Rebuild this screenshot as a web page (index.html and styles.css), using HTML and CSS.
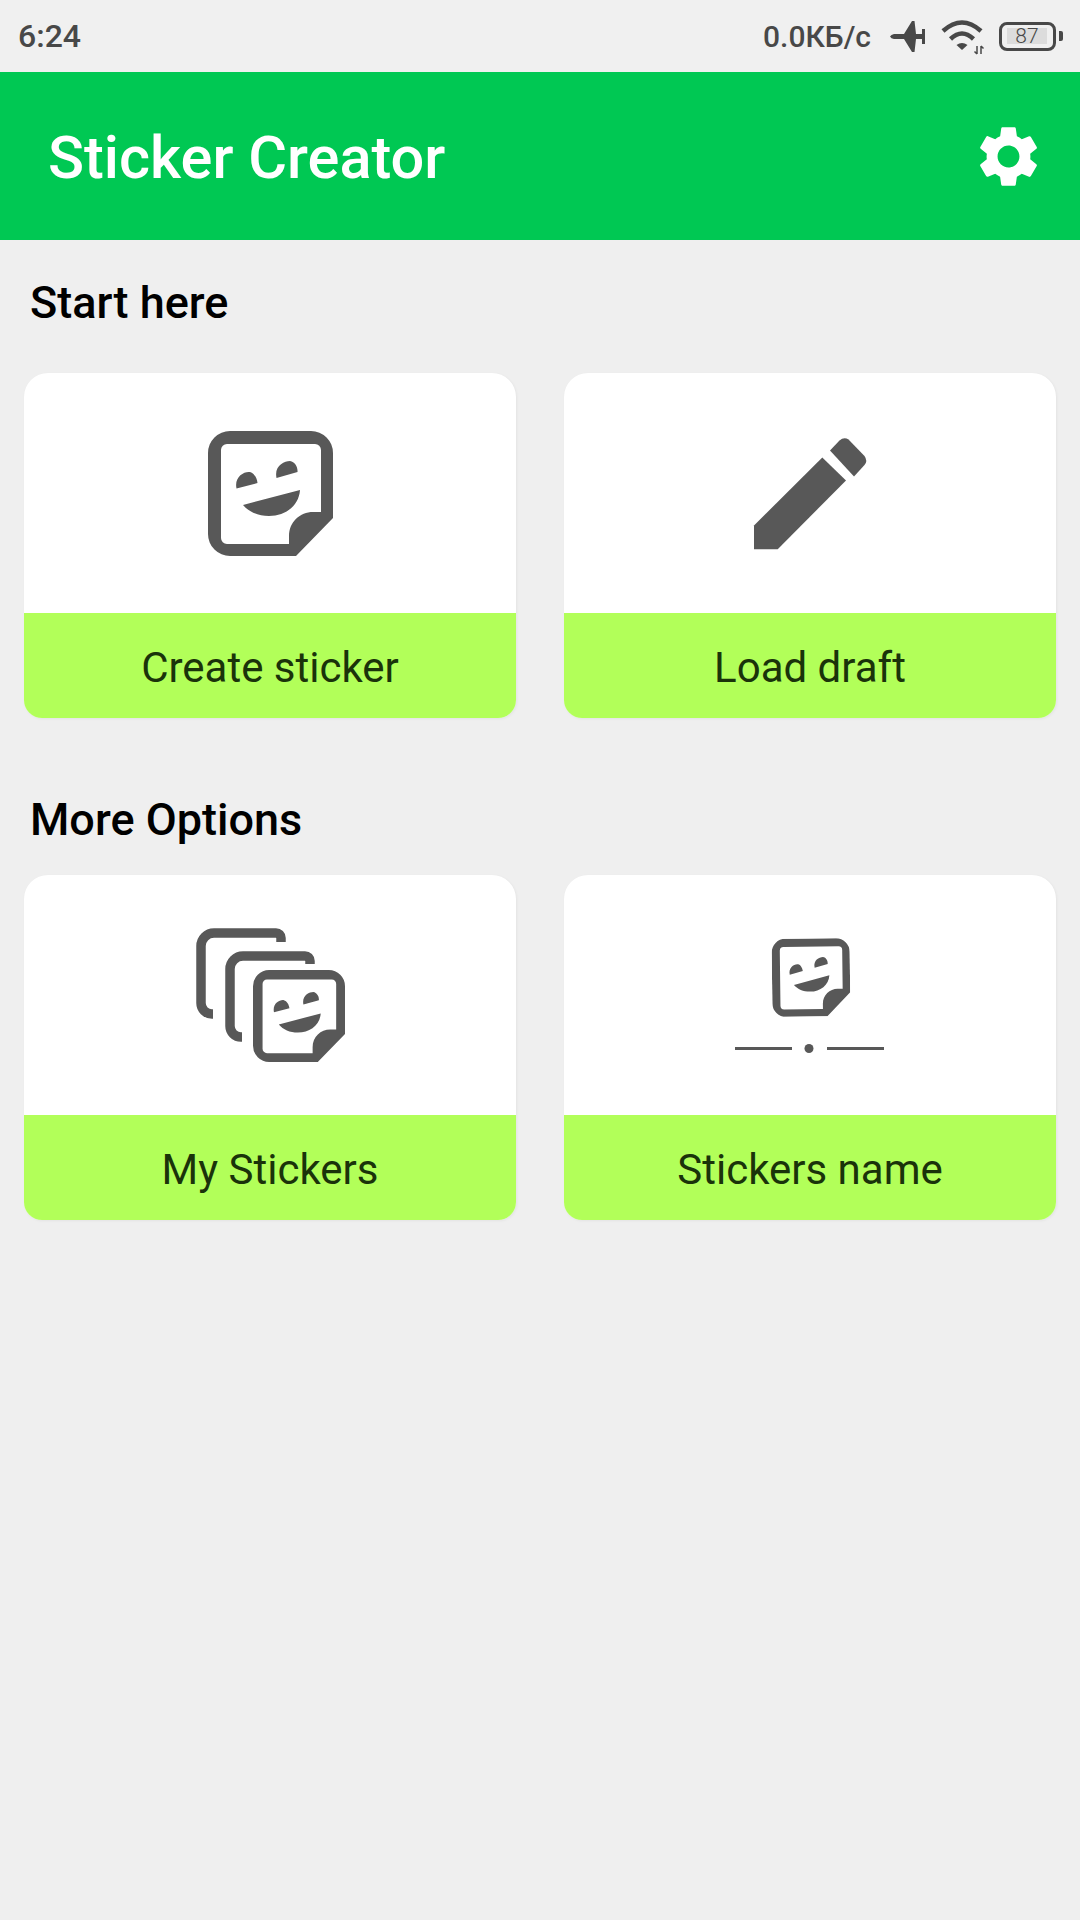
FILE: index.html
```html
<!DOCTYPE html>
<html lang="en">
<head>
<meta charset="utf-8">
<title>Sticker Creator</title>
<link rel="stylesheet" href="styles.css">
</head>
<body>
<svg class="defs" width="0" height="0" aria-hidden="true">
  <defs>
    <symbol id="sticker" viewBox="0 0 125 125">
      <path fill-rule="evenodd" d="M22 0H103A22 22 0 0 1 125 22V87L88 125H22A22 22 0 0 1 0 103V22A22 22 0 0 1 22 0ZM19 13A6 6 0 0 0 13 19V107A6 6 0 0 0 19 113H81V105C81 91 92 81 105 81H113V19A6 6 0 0 0 107 13Z"/>
      <path d="M28.500 57.500C26 46 36 40 42 41C46 42 49 47 49.500 52ZM68.500 47C66 35 76 30 82 30C87 31 90 36 89.500 41ZM35 74L92 59C91 75 77 85 61 85C50 85 41 81 35 74Z"/>
    </symbol>
  </defs>
</svg>
<header class="status-bar">
  <span class="clock">6:24</span>
  <div class="status-right">
    <span class="net">0.0КБ/с</span>
    <svg class="plane" width="35" height="31" viewBox="0 0 35 31"><path d="M0 15.500Q1 13.500 4 13H14L22 0H24.500L26 13H32V8H35V23H32V18H26L24.500 31H22L14 18H4Q1 17.500 0 15.500Z"/></svg>
    <svg class="wifi" width="42" height="33" viewBox="0 0 42 33"><g fill="none" stroke-width="4.500"><path d="M2 11Q21 -6 40 11"/><path d="M9.500 19Q21 8 32.500 19"/></g><path class="wifi-dot" d="M15.500 25Q21 21 26.500 25L21 30Z"/><path class="arrows" d="M36 26V34M33.500 31.500L36 34M40 26V34M40 26L42.500 28.500"/></svg>
    <div class="battery">
      <div class="battery-body"><span class="battery-level">87</span></div>
      <span class="battery-nub"></span>
    </div>
  </div>
</header>
<header class="app-bar">
  <h1 class="app-title">Sticker Creator</h1>
  <svg class="gear" width="73" height="73" viewBox="0 0 24 24"><path d="M19.140 12.940c.04-.3.06-.61.06-.94 0-.32-.02-.64-.07-.94l2.030-1.580c.18-.14.23-.41.12-.61l-1.920-3.320c-.12-.22-.37-.29-.59-.22l-2.390.96c-.5-.38-1.030-.7-1.620-.94l-.36-2.540c-.04-.24-.24-.41-.48-.41h-3.840c-.24 0-.43.17-.47.41l-.36 2.540c-.59.24-1.130.57-1.620.94l-2.390-.96c-.22-.08-.47 0-.59.22L2.740 8.870c-.12.21-.08.47.12.61l2.030 1.580c-.05.3-.09.63-.09.94s.02.64.07.94l-2.030 1.580c-.18.14-.23.41-.12.61l1.920 3.320c.12.22.37.29.59.22l2.390-.96c.5.38 1.030.7 1.620.94l.36 2.540c.05.24.24.41.48.41h3.840c.24 0 .44-.17.47-.41l.36-2.540c.59-.24 1.130-.56 1.620-.94l2.390.96c.22.08.47 0 .59-.22l1.920-3.320c.12-.22.07-.47-.12-.61l-2.010-1.580zM12 15.600c-1.980 0-3.600-1.620-3.600-3.600s1.620-3.600 3.600-3.600 3.600 1.620 3.600 3.600-1.620 3.600-3.600 3.600z"/></svg>
</header>
<main class="content">
  <h2 class="section-title section-first">Start here</h2>
  <div class="card-grid">
    <article class="card">
      <div class="card-icon"><svg class="icon" width="125" height="125"><use href="#sticker"/></svg></div>
      <div class="card-label">Create sticker</div>
    </article>
    <article class="card">
      <div class="card-icon"><svg class="icon" width="125" height="125" viewBox="0 0 125 125"><path d="M6 94.500L74.300 26.500L98 49.500L29.700 118.200H6Z"/><path d="M82 19.500L91.500 9.500Q96 5.500 100.500 8.500L116.500 25Q120 30 116.500 34L106 45.500Z"/></svg></div>
      <div class="card-label">Load draft</div>
    </article>
  </div>
  <h2 class="section-title section-second">More Options</h2>
  <div class="card-grid">
    <article class="card">
      <div class="card-icon"><svg class="icon" width="148" height="135" viewBox="0 0 148 135"><g class="outline"><path d="M85 14V10A5 5 0 0 0 80 5H18A13 13 0 0 0 5 18V75A11 11 0 0 0 16 86H17"/><path d="M114 36V33A5 5 0 0 0 109 28H47A13 13 0 0 0 34 41V98A11 11 0 0 0 45 109H46"/></g><use href="#sticker" x="57" y="42" width="92" height="92"/></svg></div>
      <div class="card-label">My Stickers</div>
    </article>
    <article class="card">
      <div class="card-icon"><svg class="icon name-icon" width="149" height="115" viewBox="0 0 149 115"><use href="#sticker" class="tilted" x="37" y="1" width="78" height="78"/><path d="M0 110.500H57M92 110.500H149" class="rule"/><circle cx="74" cy="110.500" r="4.500"/></svg></div>
      <div class="card-label">Stickers name</div>
    </article>
  </div>
</main>
</body>
</html>
```
FILE: styles.css
```css
* {
  box-sizing: border-box;
}

html,
body {
  margin: 0;
  height: 100%;
}

body {
  background: #efefef;
  font-family: Roboto, "Liberation Sans", sans-serif;
  display: flex;
  flex-direction: column;
  min-height: 1920px;
}

.defs {
  position: absolute;
}

.status-bar {
  height: 72px;
  display: flex;
  align-items: center;
  justify-content: space-between;
  padding: 0 17px 0 18px;
  color: #484848;
  background: #f0f0f0;
}

.clock {
  font-size: 32px;
  font-weight: 500;
}

.net {
  font-size: 30px;
  font-weight: 500;
  margin-right: 19px;
}

.status-right {
  display: flex;
  align-items: center;
}

.plane {
  fill: #484848;
  margin-right: 16px;
}

.wifi {
  fill: #484848;
  stroke: #484848;
  margin-right: 16px;
  overflow: visible;
}

.wifi-dot {
  stroke: none;
}

.arrows {
  fill: none;
  stroke-width: 1.500;
}

.battery {
  display: flex;
  align-items: center;
  gap: 3px;
}

.battery-body {
  width: 57px;
  height: 29px;
  border: 3.500px solid #484848;
  border-radius: 8px;
  padding: 3px 6px 4px 5px;
  display: flex;
}

.battery-level {
  flex: 1;
  background: #dcdcdc;
  font-size: 21px;
  font-weight: 300;
  line-height: 17px;
  text-align: center;
}

.battery-nub {
  width: 4px;
  height: 10px;
  background: #484848;
  border-radius: 0 2px 2px 0;
}

.app-bar {
  height: 168px;
  background: #00c853;
  display: flex;
  align-items: center;
  justify-content: space-between;
  padding: 0 35px 0 48px;
}

.app-title {
  margin: 0;
  padding-top: 4px;
  color: #ffffff;
  font-size: 59.500px;
  font-weight: 500;
}

.gear {
  fill: #ffffff;
}

.content {
  padding: 0 24px;
}

.section-title {
  margin: 0;
  height: 60px;
  line-height: 62px;
  padding-left: 6px;
  color: #000000;
  font-size: 45px;
  font-weight: 500;
}

.section-first {
  margin-top: 32px;
  margin-bottom: 41px;
}

.section-second {
  margin-top: 71px;
  margin-bottom: 26px;
}

.card-grid {
  display: grid;
  grid-template-columns: 492px 492px;
  gap: 48px;
}

.card {
  height: 345px;
  display: flex;
  flex-direction: column;
  background: #ffffff;
  border-radius: 24px 24px 18px 18px;
  overflow: hidden;
  box-shadow: 1px 1px 3px rgba(0, 0, 0, 0.05);
}

.card-icon {
  height: 240px;
  display: flex;
  align-items: center;
  justify-content: center;
}

.icon {
  fill: #585858;
  overflow: visible;
}

.name-icon {
  margin-left: -1px;
}

.tilted {
  transform: rotate(-0.700deg);
  transform-box: fill-box;
  transform-origin: center;
}

.outline {
  fill: none;
  stroke: #585858;
  stroke-width: 9.500;
}

.rule {
  fill: none;
  stroke: #585858;
  stroke-width: 3;
}

.card-label {
  flex: 1;
  background: #b2ff59;
  color: #1a330a;
  display: flex;
  align-items: center;
  justify-content: center;
  padding-top: 4px;
  font-size: 42px;
}
```
